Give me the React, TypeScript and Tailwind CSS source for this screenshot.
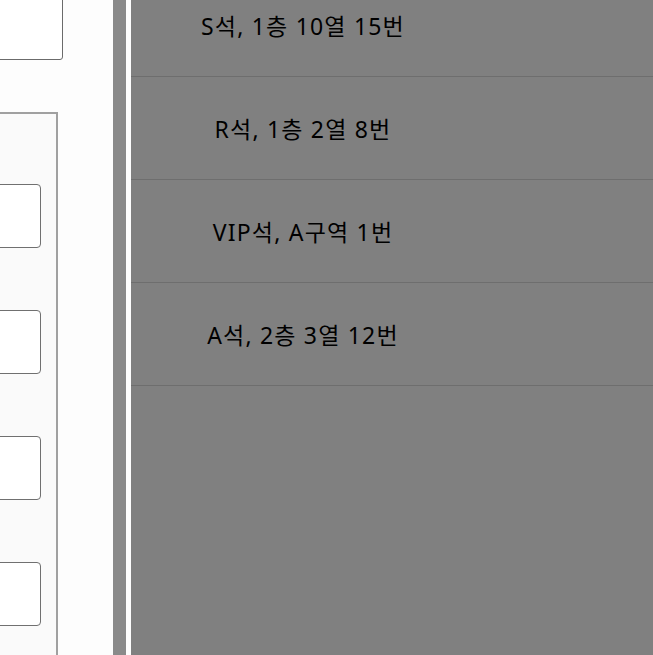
import React from "react";

const seats = ["S석, 1층 10열 15번", "R석, 1층 2열 8번", "VIP석, A구역 1번", "A석, 2층 3열 12번"];

export default function App() {
  return (
    <div
      className="flex h-[655px] w-full overflow-hidden bg-[#fdfdfd]"
      style={{ fontFamily: '"Noto Sans", "Noto Sans CJK KR", sans-serif' }}
    >
      <div className="flex w-[113px] shrink-0 flex-col">
        <div className="-mt-[41px] -ml-[100px] h-[101px] w-[163px] shrink-0 rounded-[3px] border border-[#6b6b6b] bg-white" />
        <div className="-ml-[100px] mt-[52px] flex w-[158px] grow flex-col gap-[62px] border-2 border-b-0 border-[#a0a0a0] bg-[#fafafa] pt-[70px] pr-[15px]">
          {[0, 1, 2, 3].map((i) => (
            <div key={i} className="h-[64px] shrink-0 rounded-[4px] border border-[#707070] bg-white" />
          ))}
        </div>
      </div>
      <div className="w-[13px] shrink-0 bg-[#8a8a8a]" />
      <div className="w-[5px] shrink-0 bg-[#fdfdfd]" />
      <div className="flex grow flex-col bg-[#808080]">
        <div className="-mt-[26px]">
          {seats.map((s) => (
            <div key={s} className="flex h-[103px] items-center border-b border-[#6e6e6e]">
              <div className="w-[344px] pt-[2px] text-center text-[23px] leading-none tracking-[1.2px] text-[#000]">{s}</div>
            </div>
          ))}
        </div>
      </div>
    </div>
  );
}
